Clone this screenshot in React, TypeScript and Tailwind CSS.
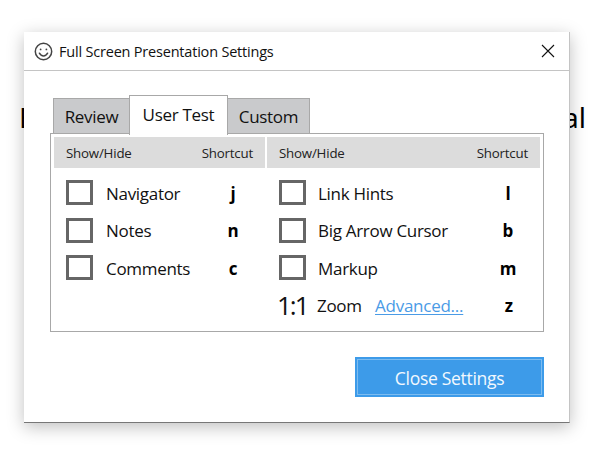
const font = "font-['Open_Sans','Noto_Sans',sans-serif]";

const Check = () => <div className="w-[27px] h-[25px] border-[3px] border-[#666666] bg-white shrink-0" />;

const Key = ({ k, className }: { k: string; className: string }) => (
  <span className={`font-bold text-[17px] text-black text-center pt-[2px] ${className}`}>{k}</span>
);

const Smiley = () => (
  <svg width="19" height="19" viewBox="0 0 19 19" fill="none" stroke="#444444" strokeWidth="1.5">
    <circle cx="9.5" cy="9.5" r="8.2" />
    <circle cx="6.6" cy="7.4" r="0.9" fill="#444444" stroke="none" />
    <circle cx="12.4" cy="7.4" r="0.9" fill="#444444" stroke="none" />
    <path d="M5.4 11.2c1 1.9 2.4 2.7 4.1 2.7s3.1-.8 4.1-2.7" strokeLinecap="round" />
  </svg>
);

const Row = ({ label, gap, k, keyClass }: { label: string; gap: string; k: string; keyClass: string }) => (
  <div className="flex items-center h-[25px] mb-[12.5px]">
    <Check />
    <span className={`pt-[2px] text-[17px] tracking-[-0.3px] text-[#111111] ${gap}`}>{label}</span>
    <Key k={k} className={keyClass} />
  </div>
);

export default function App() {
  return (
    <div className={`relative w-[597px] h-[449px] bg-white overflow-hidden ${font}`}>
      {/* text of the page behind the dialog */}
      <div className="flex justify-between pl-[19px] pr-[11px] pt-[98px] text-[28px] leading-[38px] font-['Noto_Sans',sans-serif] text-black">
        <span>E</span>
        <span>al</span>
      </div>

      <div className="absolute left-[24px] top-[32px] w-[546px] h-[391px] bg-white border-r border-[#c4c4c4] border-b border-b-[#777777] shadow-[0_4px_16px_rgba(0,0,0,0.25)]">
        <div className="flex items-center h-[39px] pl-[10px] pr-[14px] border-b border-[#c4c4c4]">
          <Smiley />
          <span className="ml-[6px] pt-[1px] text-[14.5px] tracking-[-0.2px] text-[#111111]">Full Screen Presentation Settings</span>
          <svg className="ml-auto" width="14" height="14" viewBox="0 0 14 14" stroke="#111111" strokeWidth="1.1">
            <path d="M1 1l12 12M13 1L1 13" />
          </svg>
        </div>

        <div className="pl-[26px] pt-[24px]">
          <div className="flex items-end pl-[3px] h-[38px]">
            <div className="w-[77px] h-[35px] pt-[2px] flex items-center justify-center bg-[#c9cacc] border border-b-0 border-[#a8a8a8] text-[17px] tracking-[-0.3px] text-[#111111]">Review</div>
            <div className="relative z-10 -ml-px -mb-[2px] w-[99px] h-[40px] pb-[2px] flex items-center justify-center bg-white border border-b-0 border-[#a8a8a8] text-[17px] tracking-[-0.3px] text-[#111111]">User Test</div>
            <div className="w-[82px] h-[35px] pt-[1px] flex items-center justify-center bg-[#c9cacc] border border-l-0 border-b-0 border-[#a8a8a8] text-[17px] tracking-[-0.3px] text-[#111111]">Custom</div>
          </div>

          <div className="w-[494px] h-[199px] border border-[#a8a8a8] pt-[3px] px-[3px]">
            <div className="flex gap-[2px] text-[13.3px] tracking-[-0.2px] text-[#222222]">
              <div className="w-[211px] h-[31px] pt-[2px] bg-[#dcdcdc] flex items-center justify-between pl-[12px] pr-[12px]">
                <span>Show/Hide</span>
                <span>Shortcut</span>
              </div>
              <div className="w-[273px] h-[31px] pt-[2px] bg-[#dcdcdc] flex items-center justify-between pl-[12px] pr-[12px]">
                <span>Show/Hide</span>
                <span>Shortcut</span>
              </div>
            </div>

            <div className="flex pt-[12px]">
              <div className="w-[213px] pl-[12px]">
                <Row label="Navigator" gap="ml-[13px] w-[117px]" k="j" keyClass="w-[20px]" />
                <Row label="Notes" gap="ml-[13px] w-[117px]" k="n" keyClass="w-[20px]" />
                <Row label="Comments" gap="ml-[13px] w-[117px]" k="c" keyClass="w-[20px]" />
              </div>
              <div className="pl-[12px]">
                <Row label="Link Hints" gap="ml-[12px] w-[180px]" k="l" keyClass="w-[20px]" />
                <Row label="Big Arrow Cursor" gap="ml-[12px] w-[180px]" k="b" keyClass="w-[20px]" />
                <Row label="Markup" gap="ml-[12px] w-[180px]" k="m" keyClass="w-[20px]" />
                <div className="flex items-center h-[25px]">
                  <span className="w-[39px] -ml-[2px] mr-[1px] text-[26px] text-[#111111] tracking-[-2px]">1:1</span>
                  <span className="w-[58px] pt-[2px] text-[17px] tracking-[-0.3px] text-[#111111]">Zoom</span>
                  <a className="w-[124px] pt-[2px] text-[17px] tracking-[-0.25px] text-[#4a9be6] underline underline-offset-2">Advanced...</a>
                  <Key k="z" className="w-[20px]" />
                </div>
              </div>
            </div>
          </div>

          <div className="flex justify-end w-[494px] mt-[25px]">
            <button className="w-[189px] h-[40px] bg-[#3d9be9] p-[2px]">
              <span className="flex items-center justify-center pt-[2px] w-full h-full border border-[#7dbcf0] text-[17.5px] tracking-[-0.3px] text-[#f2f8fe]">Close Settings</span>
            </button>
          </div>
        </div>
      </div>
    </div>
  );
}
